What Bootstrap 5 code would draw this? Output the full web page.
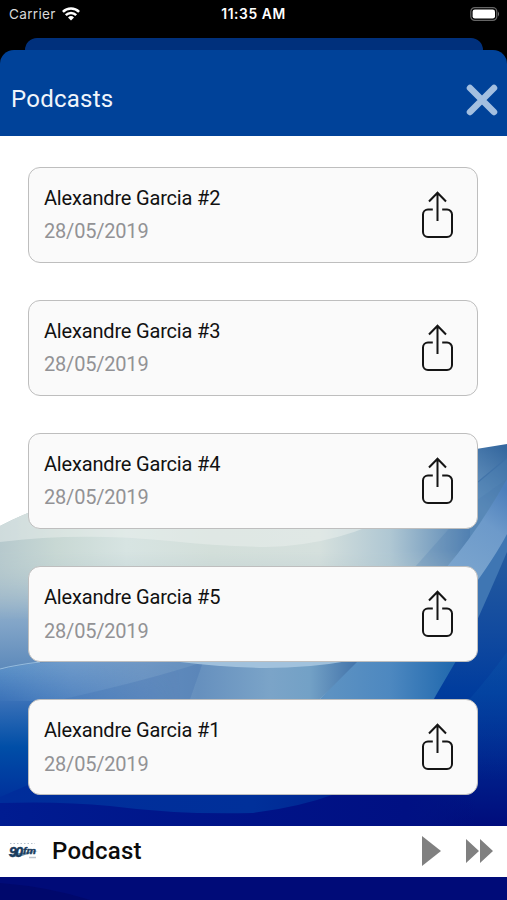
<!DOCTYPE html>
<html lang="en">
<head>
<meta charset="utf-8">
<meta name="viewport" content="width=device-width, initial-scale=1">
<title>Podcasts</title>
<link href="https://cdn.jsdelivr.net/npm/bootstrap@5.3.0/dist/css/bootstrap.min.css" rel="stylesheet">
<style>
body{background:#000;font-family:Roboto,"Liberation Sans",sans-serif;height:900px;overflow:hidden}
.screen{height:900px}
.status{height:38px;font-family:Inter,"Liberation Sans",sans-serif;color:#fff;padding:0 7px 10px 9px;line-height:28px}
.status .carrier{color:#d8d8d8;font-size:13.6px;letter-spacing:.3px}
.status .clock{font-weight:600;font-size:13.8px;letter-spacing:.6px}
.status .wifi{margin-left:6px}
.back-sheet{height:12px;margin:0 24px 0 25px;background:#00307c;border-radius:12px 12px 0 0}
.title-bar{height:86px;background:#004299;border-radius:14px 14px 0 0;padding:13px 9px 0 11px;color:#fff}
.title-bar h1{font-size:24px;font-weight:400;letter-spacing:.25px;line-height:28px;color:#f0f5fb;padding-bottom:1px}
.backdrop{left:0;top:0;width:507px;height:764px;z-index:0}
.episodes{height:689.5px;padding:30.5px 29px 0 28px;gap:37.2px;z-index:1}
.episode{height:96px;border:1.5px solid #bebebe;border-radius:12px;background:#fafafa;padding:0 24px 0 15px}
.episode h2{font-size:20px;font-weight:400;line-height:24px;color:#111;margin:-.5px 0 9.5px;letter-spacing:-.18px}
.episode p{font-size:20px;line-height:24px;color:#929295;margin:0;letter-spacing:-.2px}
.player{height:51.5px;z-index:1;padding:0 14px 0 8px}
.player .now{font-size:24px;font-weight:500;color:#0c0c0c;margin-left:13px;line-height:28px;letter-spacing:.25px}
.player .skip{margin-left:25px}
</style>
<script src="https://cdn.jsdelivr.net/npm/bootstrap@5.3.0/dist/js/bootstrap.bundle.min.js"></script>
</head>
<body>
<svg class="d-none" aria-hidden="true">
  <symbol id="share" viewBox="0 0 32 48"><path d="M11.800 18.500H7a5 5 0 0 0-5 5V41a5 5 0 0 0 5 5h19a5 5 0 0 0 5-5V23.500a5 5 0 0 0-5-5H21.200M16.500 30V2M8 10.500l8.500-8.800 8.500 8.800" fill="none" stroke="#151515" stroke-width="2"/></symbol>
</svg>
<div class="screen d-flex flex-column">
  <div class="status d-flex align-items-center justify-content-between position-relative">
    <div class="d-flex align-items-center"><span class="carrier">Carrier</span>
      <svg class="wifi" width="18" height="14" viewBox="0 0 18 14" fill="none" stroke="#fff" stroke-width="2.500"><path d="M.9 4.800a11.500 11.500 0 0 1 16.200 0M3.800 8.200a7.300 7.300 0 0 1 10.400 0"/><path d="M6 10.500a4.300 4.300 0 0 1 6 0L9 13.600z" fill="#fff" stroke="none"/></svg>
    </div>
    <span class="clock position-absolute start-50 translate-middle-x text-nowrap">11:35 AM</span>
    <svg width="30" height="14" viewBox="0 0 30 14"><rect x=".8" y=".6" width="26" height="12.800" rx="4" fill="none" stroke="#666" stroke-width="1.200"/><rect x="2.600" y="2.400" width="22.400" height="9.200" rx="2.300" fill="#fff"/><path d="M28 4.500q2 2.500 0 5z" fill="#777"/></svg>
  </div>
  <div class="back-sheet"></div>
  <header class="title-bar d-flex align-items-center justify-content-between">
    <h1 class="m-0">Podcasts</h1>
    <svg width="32" height="32" viewBox="0 0 32 32" stroke="#a3bfe0" stroke-width="6.500" stroke-linecap="round"><path d="M4 4l24 24M28 4L4 28"/></svg>
  </header>
  <main class="position-relative bg-white flex-grow-1">
    <svg class="backdrop position-absolute" viewBox="0 136 507 764" preserveAspectRatio="none">
      <defs>
        <linearGradient id="base" x1="0" y1="510" x2="0" y2="672" gradientUnits="userSpaceOnUse"><stop offset="0" stop-color="#c8d6d4"/><stop offset=".35" stop-color="#b4c7cd"/><stop offset=".7" stop-color="#82a5c8"/><stop offset="1" stop-color="#5b88ba"/></linearGradient>
        <linearGradient id="pale" x1="0" y1="0" x2="470" y2="0" gradientUnits="userSpaceOnUse"><stop offset="0" stop-color="#b6c9cd"/><stop offset=".12" stop-color="#c8d8d4"/><stop offset=".27" stop-color="#d7e4e2"/><stop offset=".45" stop-color="#d3dfda"/><stop offset=".68" stop-color="#d5e0dd"/><stop offset=".83" stop-color="#afc7d3"/><stop offset="1" stop-color="#5584b4"/></linearGradient>
        <linearGradient id="fade" x1="0" y1="550" x2="0" y2="620" gradientUnits="userSpaceOnUse"><stop offset="0" stop-color="#fff"/><stop offset="1" stop-color="#000"/></linearGradient>
        <mask id="melt"><path d="M0 440H507V620H0z" fill="url(#fade)"/></mask>
        <linearGradient id="haze" x1="0" y1="0" x2="360" y2="0" gradientUnits="userSpaceOnUse"><stop offset="0" stop-color="#5f94c9"/><stop offset=".2" stop-color="#6e9aca"/><stop offset=".4" stop-color="#6f97c4"/><stop offset=".55" stop-color="#6690be"/><stop offset=".75" stop-color="#7ba4c8"/><stop offset=".86" stop-color="#73a1c6"/><stop offset="1" stop-color="#3f70a8"/></linearGradient>
        <linearGradient id="dusk" x1="0" y1="664" x2="0" y2="702" gradientUnits="userSpaceOnUse"><stop offset="0" stop-color="#3a71b8" stop-opacity="0"/><stop offset="1" stop-color="#3a71b8"/></linearGradient>
        <linearGradient id="wave" x1="0" y1="700" x2="0" y2="805" gradientUnits="userSpaceOnUse"><stop offset="0" stop-color="#3a71b8"/><stop offset=".45" stop-color="#004ea7"/><stop offset="1" stop-color="#002d9b"/></linearGradient>
        <linearGradient id="side" x1="0" y1="0" x2="180" y2="0" gradientUnits="userSpaceOnUse"><stop offset="0" stop-color="#fff"/><stop offset=".2" stop-color="#bbb"/><stop offset="1" stop-color="#000"/></linearGradient>
        <mask id="sidefade"><path d="M0 640H180V830H0z" fill="url(#side)"/></mask>
        <linearGradient id="right" x1="0" y1="530" x2="0" y2="826" gradientUnits="userSpaceOnUse"><stop offset="0" stop-color="#2b609f"/><stop offset=".35" stop-color="#114a9f"/><stop offset=".55" stop-color="#003c9d"/><stop offset=".75" stop-color="#00278f"/><stop offset="1" stop-color="#000c7c"/></linearGradient>
        <linearGradient id="ribbon" x1="330" y1="0" x2="450" y2="0" gradientUnits="userSpaceOnUse"><stop offset="0" stop-color="#5d92c2"/><stop offset=".5" stop-color="#4d88c0"/><stop offset="1" stop-color="#246baf"/></linearGradient>
        <linearGradient id="band" x1="507" y1="490" x2="450" y2="570" gradientUnits="userSpaceOnUse"><stop offset="0" stop-color="#4b7ebb"/><stop offset=".4" stop-color="#6d9aca"/><stop offset="1" stop-color="#7ba5ce"/></linearGradient>
        <linearGradient id="top" x1="507" y1="450" x2="470" y2="500" gradientUnits="userSpaceOnUse"><stop offset="0" stop-color="#35689f"/><stop offset="1" stop-color="#6f9bc4"/></linearGradient>
        <linearGradient id="glow" x1="0" y1="652" x2="0" y2="780" gradientUnits="userSpaceOnUse"><stop offset="0" stop-color="#0b56ab" stop-opacity=".4"/><stop offset="1" stop-color="#0b56ab" stop-opacity="0"/></linearGradient>
        <linearGradient id="foot" x1="0" y1="0" x2="507" y2="0" gradientUnits="userSpaceOnUse"><stop offset="0" stop-color="#001c91"/><stop offset=".5" stop-color="#001387"/><stop offset=".8" stop-color="#001083"/><stop offset=".94" stop-color="#000c7c" stop-opacity="0"/></linearGradient>
        <linearGradient id="low" x1="0" y1="0" x2="507" y2="0" gradientUnits="userSpaceOnUse"><stop offset="0" stop-color="#002d9b"/><stop offset=".5" stop-color="#00309a"/><stop offset=".75" stop-color="#00208e"/><stop offset=".94" stop-color="#001687" stop-opacity="0"/></linearGradient>
      </defs>
      <path d="M0 526Q25 513 40 509H472V690H0z" fill="url(#base)"/>
      <path d="M0 526Q25 513 40 509H472V620H0z" fill="url(#pale)" mask="url(#melt)"/>
      <path d="M0 526Q25 513 40 509H405Q340 546 265 547Q215 546 170 541Q80 532 0 542z" fill="#edf2ef" opacity=".45"/>
      <path d="M470 450L507 444V560H470z" fill="url(#top)"/>
      <path d="M470 488L507 458V560H470z" fill="#457aaf" opacity=".4"/>
      <path d="M478 482L507 458" stroke="#3d6fa6" stroke-width="1.200" opacity=".7"/>
      <path d="M447 567Q478 530 507 479L470 505L415 567z" fill="#3f73a8" opacity=".2"/>
      <path d="M0 670Q30 662 60 662H360L317 702H0z" fill="url(#haze)"/>
      <path d="M50 702Q150 680 203 662L189 702z" fill="#416fae" opacity=".3"/>
      <path d="M0 669Q15 665 32 661H180V702H0z" fill="url(#dusk)" mask="url(#sidefade)"/>
      <path d="M0 701H34V808H0z" fill="url(#wave)"/>
      <path d="M0 669Q15 665 40 662" fill="none" stroke="#94bbdd" stroke-width="1.200"/>
      <path d="M180 661H348Q310 668 265 668Q220 667 180 662z" fill="#a9c8e0" opacity=".85"/>
      <path d="M358 661H460L432 702H317z" fill="url(#ribbon)"/>
      <path d="M507 532V826H28V780H432V702L456 661L470 590Q497 560 507 532z" fill="url(#right)"/>
      <path d="M507 525V552Q490 592 470 636V585z" fill="#3f76b3"/>
      <path d="M446 568Q480 528 507 479V534Q495 557 470 591V568z" fill="url(#band)"/>
      <path d="M507 652Q490 676 467 702V780H507z" fill="url(#glow)"/>
      <path d="M0 797L28 785H478V826H0z" fill="url(#low)"/>
      <path d="M0 803Q60 801 110 806Q180 815 253 813Q300 807 335 794L345 785H478V826H0z" fill="url(#foot)"/>
      <path d="M0 877H507V900H0z" fill="#000b78"/>
      <path d="M0 883Q50 887 90 900H0z" fill="#00055f" opacity=".5"/>
    </svg>
    <section class="episodes position-relative d-flex flex-column">
      <article class="episode flex-shrink-0 d-flex align-items-center justify-content-between"><div><h2>Alexandre Garcia #2</h2><p>28/05/2019</p></div><svg width="32" height="48"><use href="#share"/></svg></article>
      <article class="episode flex-shrink-0 d-flex align-items-center justify-content-between"><div><h2>Alexandre Garcia #3</h2><p>28/05/2019</p></div><svg width="32" height="48"><use href="#share"/></svg></article>
      <article class="episode flex-shrink-0 d-flex align-items-center justify-content-between"><div><h2>Alexandre Garcia #4</h2><p>28/05/2019</p></div><svg width="32" height="48"><use href="#share"/></svg></article>
      <article class="episode flex-shrink-0 d-flex align-items-center justify-content-between"><div><h2>Alexandre Garcia #5</h2><p>28/05/2019</p></div><svg width="32" height="48"><use href="#share"/></svg></article>
      <article class="episode flex-shrink-0 d-flex align-items-center justify-content-between"><div><h2>Alexandre Garcia #1</h2><p>28/05/2019</p></div><svg width="32" height="48"><use href="#share"/></svg></article>
    </section>
    <footer class="player position-relative bg-white d-flex align-items-center">
      <svg width="31" height="20" viewBox="0 0 31 20"><path d="M2 2.500h25" stroke="#b7c1cc" stroke-width="1" stroke-dasharray="1.500 2"/><path d="M0 13.500Q5 17 14 15Q22 12 30 10Q18 11 0 13.500z" fill="#6f91a9"/><text x="1" y="15.500" font-family="Liberation Sans,sans-serif" font-size="14" font-weight="700" font-style="italic" fill="#183b5c" stroke="#183b5c" stroke-width=".5" textLength="14">90</text><text x="15" y="13" font-family="Liberation Sans,sans-serif" font-size="9" font-weight="700" font-style="italic" fill="#183b5c" stroke="#183b5c" stroke-width=".4" textLength="13" lengthAdjust="spacingAndGlyphs">fm</text><path d="M21 16.500h7" stroke="#bbc3cc" stroke-width="1.500"/></svg>
      <span class="now">Podcast</span>
      <svg class="ms-auto" width="19" height="30" viewBox="0 0 19 30"><path d="M0 0l19 15L0 30z" fill="#808080"/></svg>
      <svg class="skip" width="27" height="24" viewBox="0 0 27 24"><path d="M0 0l13 12L0 24zM14 0l13 12L14 24z" fill="#808080"/></svg>
    </footer>
  </main>
</div>
</body>
</html>
